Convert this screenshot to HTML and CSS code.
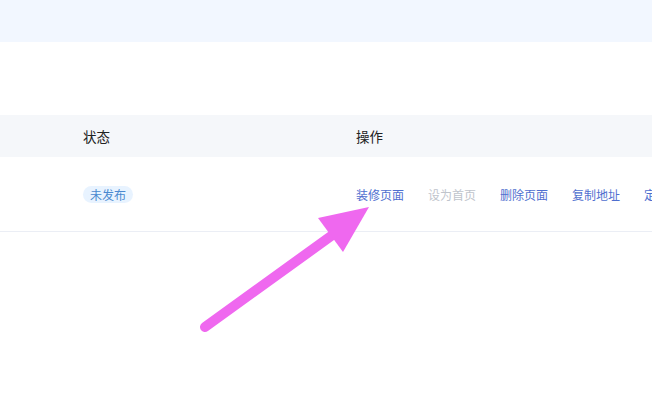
FILE: index.html
```html
<!DOCTYPE html>
<html lang="zh">
<head>
<meta charset="utf-8">
<link rel="stylesheet" href="styles.css">
</head>
<body>
<div class="topband"></div>
<div class="spacer"></div>
<div class="table">
  <div class="row head">
    <div class="cell c-first"></div>
    <div class="cell c-status">状态</div>
    <div class="cell c-ops">操作</div>
  </div>
  <div class="row body">
    <div class="cell c-first"></div>
    <div class="cell c-status"><span class="badge">未发布</span></div>
    <div class="cell c-ops">
      <span class="link">装修页面</span>
      <span class="link disabled">设为首页</span>
      <span class="link">删除页面</span>
      <span class="link">复制地址</span>
      <span class="link">定制页面</span>
    </div>
  </div>
</div>
<svg class="arrow" width="652" height="394" viewBox="0 0 652 394">
  <line x1="205" y1="327" x2="338" y2="231" stroke="#ef68ef" stroke-width="10" stroke-linecap="round"/>
  <polygon points="318,218 369,207 343,252" fill="#ef68ef"/>
</svg>
</body>
</html>
```
FILE: styles.css
```css
html, body {
  margin: 0;
  padding: 0;
  background: #ffffff;
  width: 652px;
  height: 394px;
  overflow: hidden;
  font-family: "Noto Sans CJK SC", "Liberation Sans", sans-serif;
  position: relative;
}
.topband {
  height: 42px;
  background: #f2f7ff;
}
.spacer {
  height: 73px;
}
.table {
  width: 100%;
}
.row {
  display: flex;
  align-items: center;
  white-space: nowrap;
}
.row.head {
  height: 42px;
  background: #f5f7fa;
  font-size: 13.5px;
  color: #222222;
}
.row.body {
  height: 74px;
  border-bottom: 1px solid #ebeef5;
  font-size: 12px;
}
.c-first {
  width: 83px;
  flex: none;
}
.c-status {
  width: 273px;
  flex: none;
}
.c-ops {
  flex: 1;
  display: flex;
  gap: 24px;
  overflow: hidden;
}
.badge {
  display: inline-block;
  height: 17px;
  line-height: 17px;
  padding: 0 7px;
  border-radius: 9px;
  background: #e8f3ff;
  color: #4a89d0;
  font-size: 12px;
}
.link {
  color: #4f6fcf;
  flex: none;
}
.link.disabled {
  color: #c0c4cc;
}
.arrow {
  position: absolute;
  left: 0;
  top: 0;
  pointer-events: none;
}
```
